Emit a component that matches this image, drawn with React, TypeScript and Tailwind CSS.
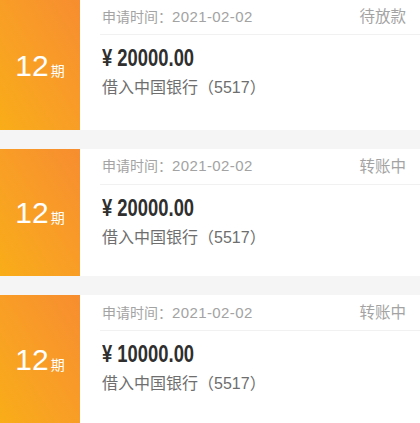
const loans = [
  { id: 1, period: 12, date: "2021-02-02", status: "待放款", amount: "20000.00", bank: "中国银行", tail: "5517", first: true },
  { id: 2, period: 12, date: "2021-02-02", status: "转账中", amount: "20000.00", bank: "中国银行", tail: "5517" },
  { id: 3, period: 12, date: "2021-02-02", status: "转账中", amount: "10000.00", bank: "中国银行", tail: "5517" },
];

type Loan = (typeof loans)[number] & { first?: boolean };

function LoanCard({ loan }: { loan: Loan }) {
  return (
    <div className={`flex bg-white ${loan.first ? "h-[133px]" : "h-[131px]"}`}>
      <div className="flex w-[80px] shrink-0 items-center justify-center bg-gradient-to-bl from-[#f78d2f] to-[#f9ad17] pt-[2px] text-white">
        <span className="text-[30px] leading-none" style={{ fontFamily: '"Liberation Sans", Arial, sans-serif' }}>
          {loan.period}
        </span>
        <span className="ml-[2px] mt-[10px] text-[14px] leading-none">期</span>
      </div>
      <div className="ml-5 flex min-w-0 flex-1 flex-col">
        <div className={`flex items-center justify-between border-b border-[#f1f1f1] pl-[2px] pr-[14px] ${loan.first ? "h-[35px]" : "h-[36px]"}`}>
          <span className="text-[14px] text-[#a3a3a3]">
            申请时间：<span className="text-[15px] tracking-[0.4px]">{loan.date}</span>
          </span>
          <span className="text-[15.5px] text-[#a3a3a3]">{loan.status}</span>
        </div>
        <div className="mt-[10px] h-[26px] pl-[2px]">
          <span
            className="inline-block origin-left scale-x-[0.8] whitespace-nowrap text-[23px] font-bold leading-[26px] text-[#2f2f2f]"
            style={{ fontFamily: '"Liberation Sans", Arial, sans-serif' }}
          >
            ¥ {loan.amount}
          </span>
        </div>
        <div className="mt-[5px] pl-[2px] text-[16px] leading-[24px] text-[#6e6e6e]">
          借入{loan.bank}（{loan.tail}）
        </div>
      </div>
    </div>
  );
}

export default function App() {
  return (
    <div
      className="flex h-[423px] w-[420px] flex-col gap-[19px] overflow-hidden bg-[#f5f5f5]"
      style={{ fontFamily: '"Liberation Sans", "Noto Sans CJK SC", sans-serif' }}
    >
      {loans.map((l) => (
        <LoanCard key={l.id} loan={l} />
      ))}
    </div>
  );
}
